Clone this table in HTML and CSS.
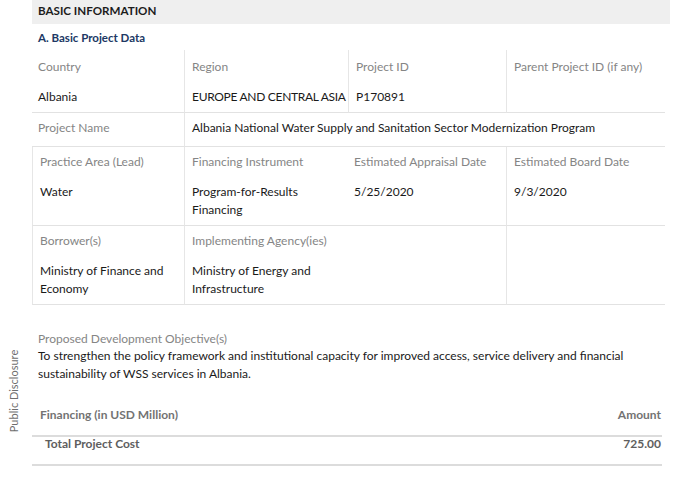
FILE: index.html
```html
<!DOCTYPE html>
<html>
<head>
<meta charset="utf-8">
<link rel="stylesheet" href="styles.css">
</head>
<body>
<div class="side-note">Public Disclosure</div>
<div class="page">
  <div class="band">BASIC INFORMATION</div>
  <div class="subhead">A. Basic Project Data</div>
  <div class="grid">
    <div class="cell first"><div class="lbl">Country</div><div class="val">Albania</div></div>
    <div class="cell first"><div class="lbl">Region</div><div class="val nowrap">EUROPE AND CENTRAL ASIA</div></div>
    <div class="cell first"><div class="lbl">Project ID</div><div class="val">P170891</div></div>
    <div class="cell first"><div class="lbl">Parent Project ID (if any)</div><div class="val"></div></div>

    <div class="cell name"><div class="lbl">Project Name</div></div>
    <div class="cell name span3"><div class="val">Albania National Water Supply and Sanitation Sector Modernization Program</div></div>

    <div class="cell"><div class="lbl">Practice Area (Lead)</div><div class="val">Water</div></div>
    <div class="cell"><div class="lbl">Financing Instrument</div><div class="val">Program-for-Results Financing</div></div>
    <div class="cell"><div class="lbl">Estimated Appraisal Date</div><div class="val">5/25/2020</div></div>
    <div class="cell"><div class="lbl">Estimated Board Date</div><div class="val">9/3/2020</div></div>

    <div class="cell"><div class="lbl">Borrower(s)</div><div class="val">Ministry of Finance and Economy</div></div>
    <div class="cell"><div class="lbl">Implementing Agency(ies)</div><div class="val">Ministry of Energy and Infrastructure</div></div>
    <div class="cell"><div class="lbl">&nbsp;</div><div class="val"></div></div>
    <div class="cell"><div class="lbl">&nbsp;</div><div class="val"></div></div>
  </div>

  <div class="pdo">
    <div class="pdo-lbl">Proposed Development Objective(s)</div>
    <div class="pdo-txt">To strengthen the policy framework and institutional capacity for improved access, service delivery and financial sustainability of WSS services in Albania.</div>
  </div>

  <div class="fin">
    <div class="fin-head"><span>Financing (in USD Million)</span><span>Amount</span></div>
    <div class="fin-row"><span>Total Project Cost</span><span>725.00</span></div>
  </div>
</div>
</body>
</html>
```
FILE: styles.css
```css
html, body {
  margin: 0;
  padding: 0;
  background: #fff;
}
body {
  font-family: Lato, "Open Sans", sans-serif;
  font-size: 12px;
  color: #1e1e1e;
  position: relative;
  width: 696px;
  height: 485px;
  overflow: hidden;
}
.page {
  margin-left: 32px;
  width: 638px;
}
.band {
  background: #efefef;
  height: 24px;
  line-height: 22px;
  padding-left: 6px;
  font-weight: 700;
  font-size: 11.6px;
  color: #1c1c1c;
}
.subhead {
  margin-top: 5px;
  line-height: 18px;
  padding-left: 6px;
  font-weight: 700;
  font-size: 11.5px;
  color: #203864;
}
.grid {
  margin-top: 3px;
  width: 633px;
  display: grid;
  grid-template-columns: 152px 164px 158px 159px;
}
.cell {
  padding: 6px 4px 6px 7px;
  border-bottom: 1px solid #e2e2e2;
  border-left: 1px solid #e6e6e6;
  line-height: 18px;
}
.cell:nth-child(4n+1) {
  border-left: none;
  padding-left: 6px;
}
.cell.first {
  padding-top: 8px;
  padding-bottom: 6px;
}
.cell.name {
  padding-top: 6px;
  padding-bottom: 9px;
}
.grid .cell.name:nth-child(5) {
  border-left: none;
  padding-left: 6px;
}
.grid .cell.name.span3 {
  grid-column: span 3;
  border-left: 1px solid #e6e6e6;
  padding-left: 7px;
}
.lbl {
  color: #858585;
  height: 18px;
  white-space: nowrap;
}
.val {
  margin-top: 12px;
  min-height: 18px;
  color: #1a1a1a;
}
.val.nowrap {
  white-space: nowrap;
  letter-spacing: -0.3px;
}
.name .val {
  margin-top: 0;
}
.pdo {
  margin-top: 26px;
  padding-left: 6px;
  width: 620px;
}
.pdo-lbl {
  color: #858585;
  line-height: 16px;
}
.pdo-txt {
  color: #1a1a1a;
  line-height: 18px;
}
.fin {
  margin-top: 18px;
  width: 630px;
  font-weight: 700;
}
.fin-head {
  display: flex;
  justify-content: space-between;
  padding: 5px 1px 11px 8px;
  line-height: 18px;
  color: #737373;
  border-bottom: 2px solid #dcdcdc;
}
.fin-row {
  display: flex;
  justify-content: space-between;
  padding: 0 1px 13px 13px;
  line-height: 14px;
  color: #5e5e5e;
  border-bottom: 2px solid #dcdcdc;
}
.side-note {
  position: absolute;
  left: 13px;
  top: 391px;
  transform: translate(-50%, -50%) rotate(-90deg);
  white-space: nowrap;
  color: #6e6e6e;
  font-size: 11px;
}
```
